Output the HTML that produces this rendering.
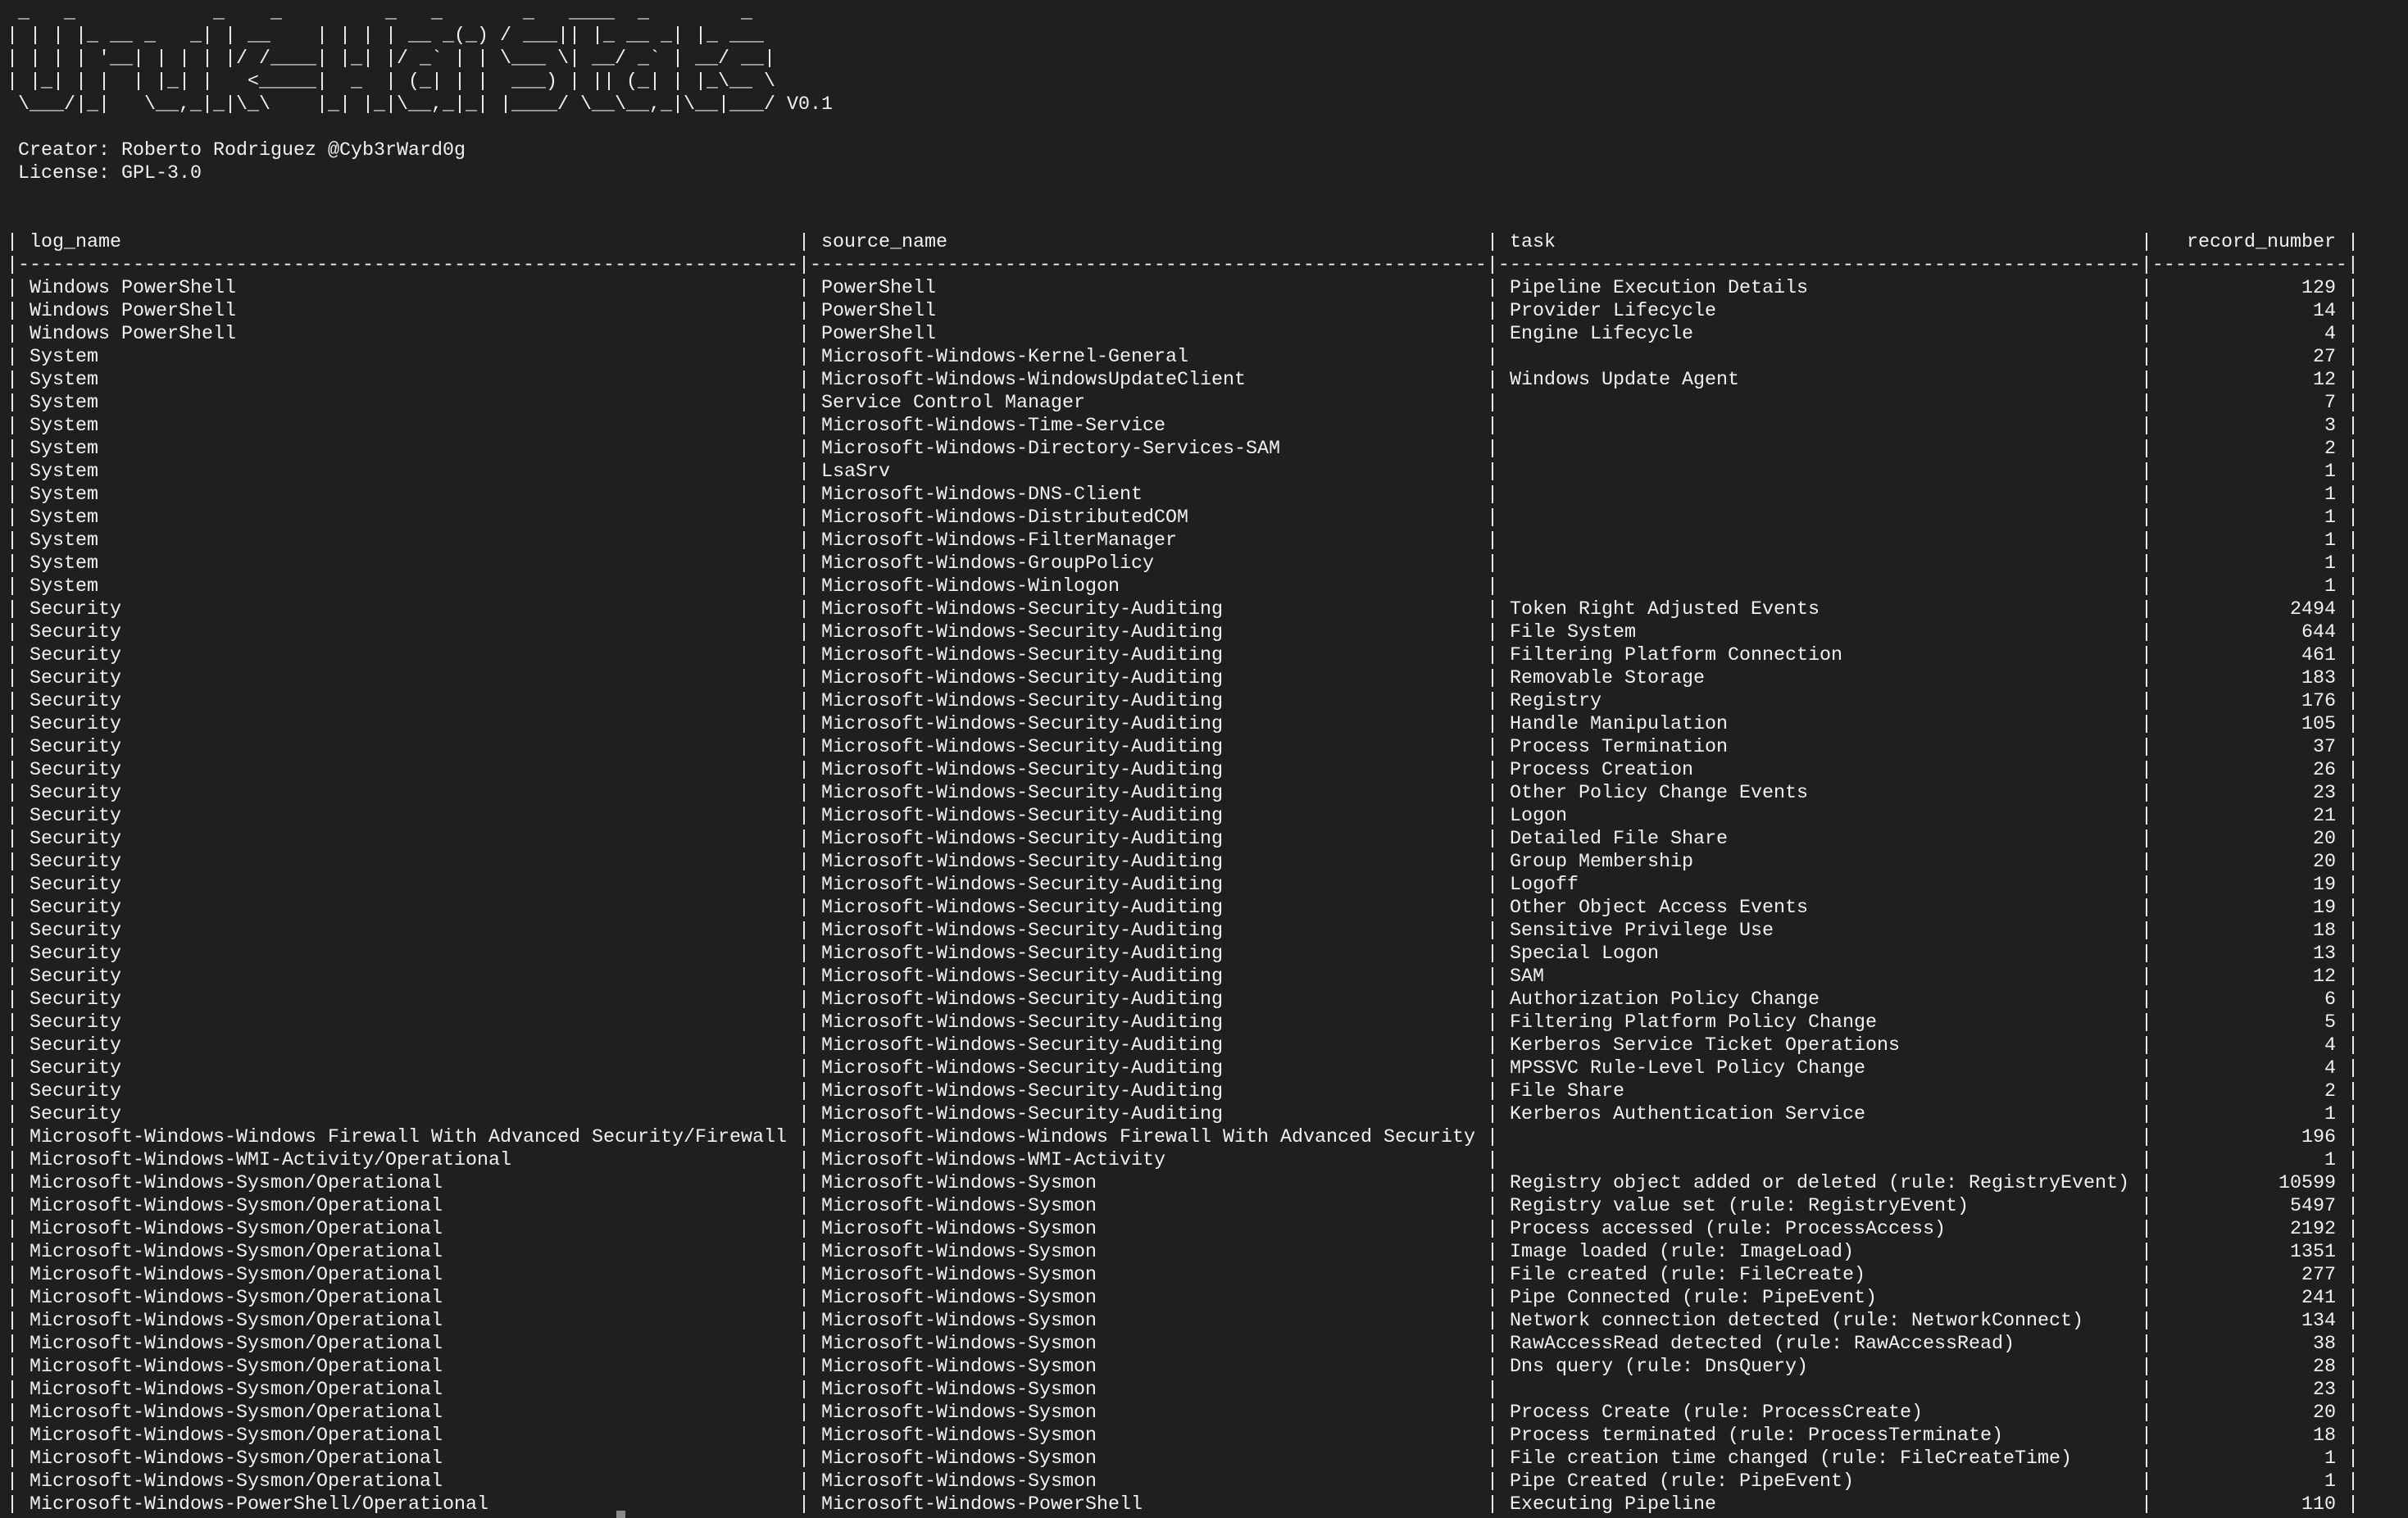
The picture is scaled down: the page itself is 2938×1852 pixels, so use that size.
<!DOCTYPE html>
<html><head><meta charset="utf-8"><style>
html,body{margin:0;padding:0;background:#1f1f1f;width:2938px;height:1852px;overflow:hidden}
body{position:relative;color:#f2f2f2;font-family:"Liberation Mono",monospace;font-size:23.33px;line-height:28px}
pre{position:absolute;left:8px;top:2px;margin:0;font:inherit;white-space:pre}
.t{position:absolute;left:0;top:282px;width:2938px}
.r{position:relative;height:28px;white-space:pre}
.r span{position:absolute;top:0}
.a{left:36px}.b{left:1002px}.c{left:1842px}
.a::before,.b::before,.c::before{content:"|";position:absolute;left:-28px}
.n{left:2612px;width:252px;text-align:right;padding-right:14px;box-sizing:border-box}
.n::before{content:"|";position:absolute;left:0}
.n::after{content:"|";position:absolute;left:252px}
.cur{position:absolute;left:752px;top:1843px;width:11px;height:9px;background:#8a8a8a}
</style></head><body>
<pre> _   _            _    _         _   _       _   ____  _        _
| | | |_ __ _   _| | __    | | | | __ _(_) / ___|| |_ __ _| |_ ___
| | | | '__| | | | |/ /____| |_| |/ _` | | \___ \| __/ _` | __/ __|
| |_| | |  | |_| |   &lt;_____|  _  | (_| | |  ___) | || (_| | |_\__ \
 \___/|_|   \__,_|_|\_\    |_| |_|\__,_|_| |____/ \__\__,_|\__|___/ V0.1

 Creator: Roberto Rodriguez @Cyb3rWard0g
 License: GPL-3.0



|--------------------------------------------------------------------|-----------------------------------------------------------|--------------------------------------------------------|-----------------|</pre>
<div class="t">
<div class="r"><span class="a">log_name</span><span class="b">source_name</span><span class="c">task</span><span class="n">record_number</span></div>
<div class="r"></div>
<div class="r"><span class="a">Windows PowerShell</span><span class="b">PowerShell</span><span class="c">Pipeline Execution Details</span><span class="n">129</span></div>
<div class="r"><span class="a">Windows PowerShell</span><span class="b">PowerShell</span><span class="c">Provider Lifecycle</span><span class="n">14</span></div>
<div class="r"><span class="a">Windows PowerShell</span><span class="b">PowerShell</span><span class="c">Engine Lifecycle</span><span class="n">4</span></div>
<div class="r"><span class="a">System</span><span class="b">Microsoft-Windows-Kernel-General</span><span class="c"></span><span class="n">27</span></div>
<div class="r"><span class="a">System</span><span class="b">Microsoft-Windows-WindowsUpdateClient</span><span class="c">Windows Update Agent</span><span class="n">12</span></div>
<div class="r"><span class="a">System</span><span class="b">Service Control Manager</span><span class="c"></span><span class="n">7</span></div>
<div class="r"><span class="a">System</span><span class="b">Microsoft-Windows-Time-Service</span><span class="c"></span><span class="n">3</span></div>
<div class="r"><span class="a">System</span><span class="b">Microsoft-Windows-Directory-Services-SAM</span><span class="c"></span><span class="n">2</span></div>
<div class="r"><span class="a">System</span><span class="b">LsaSrv</span><span class="c"></span><span class="n">1</span></div>
<div class="r"><span class="a">System</span><span class="b">Microsoft-Windows-DNS-Client</span><span class="c"></span><span class="n">1</span></div>
<div class="r"><span class="a">System</span><span class="b">Microsoft-Windows-DistributedCOM</span><span class="c"></span><span class="n">1</span></div>
<div class="r"><span class="a">System</span><span class="b">Microsoft-Windows-FilterManager</span><span class="c"></span><span class="n">1</span></div>
<div class="r"><span class="a">System</span><span class="b">Microsoft-Windows-GroupPolicy</span><span class="c"></span><span class="n">1</span></div>
<div class="r"><span class="a">System</span><span class="b">Microsoft-Windows-Winlogon</span><span class="c"></span><span class="n">1</span></div>
<div class="r"><span class="a">Security</span><span class="b">Microsoft-Windows-Security-Auditing</span><span class="c">Token Right Adjusted Events</span><span class="n">2494</span></div>
<div class="r"><span class="a">Security</span><span class="b">Microsoft-Windows-Security-Auditing</span><span class="c">File System</span><span class="n">644</span></div>
<div class="r"><span class="a">Security</span><span class="b">Microsoft-Windows-Security-Auditing</span><span class="c">Filtering Platform Connection</span><span class="n">461</span></div>
<div class="r"><span class="a">Security</span><span class="b">Microsoft-Windows-Security-Auditing</span><span class="c">Removable Storage</span><span class="n">183</span></div>
<div class="r"><span class="a">Security</span><span class="b">Microsoft-Windows-Security-Auditing</span><span class="c">Registry</span><span class="n">176</span></div>
<div class="r"><span class="a">Security</span><span class="b">Microsoft-Windows-Security-Auditing</span><span class="c">Handle Manipulation</span><span class="n">105</span></div>
<div class="r"><span class="a">Security</span><span class="b">Microsoft-Windows-Security-Auditing</span><span class="c">Process Termination</span><span class="n">37</span></div>
<div class="r"><span class="a">Security</span><span class="b">Microsoft-Windows-Security-Auditing</span><span class="c">Process Creation</span><span class="n">26</span></div>
<div class="r"><span class="a">Security</span><span class="b">Microsoft-Windows-Security-Auditing</span><span class="c">Other Policy Change Events</span><span class="n">23</span></div>
<div class="r"><span class="a">Security</span><span class="b">Microsoft-Windows-Security-Auditing</span><span class="c">Logon</span><span class="n">21</span></div>
<div class="r"><span class="a">Security</span><span class="b">Microsoft-Windows-Security-Auditing</span><span class="c">Detailed File Share</span><span class="n">20</span></div>
<div class="r"><span class="a">Security</span><span class="b">Microsoft-Windows-Security-Auditing</span><span class="c">Group Membership</span><span class="n">20</span></div>
<div class="r"><span class="a">Security</span><span class="b">Microsoft-Windows-Security-Auditing</span><span class="c">Logoff</span><span class="n">19</span></div>
<div class="r"><span class="a">Security</span><span class="b">Microsoft-Windows-Security-Auditing</span><span class="c">Other Object Access Events</span><span class="n">19</span></div>
<div class="r"><span class="a">Security</span><span class="b">Microsoft-Windows-Security-Auditing</span><span class="c">Sensitive Privilege Use</span><span class="n">18</span></div>
<div class="r"><span class="a">Security</span><span class="b">Microsoft-Windows-Security-Auditing</span><span class="c">Special Logon</span><span class="n">13</span></div>
<div class="r"><span class="a">Security</span><span class="b">Microsoft-Windows-Security-Auditing</span><span class="c">SAM</span><span class="n">12</span></div>
<div class="r"><span class="a">Security</span><span class="b">Microsoft-Windows-Security-Auditing</span><span class="c">Authorization Policy Change</span><span class="n">6</span></div>
<div class="r"><span class="a">Security</span><span class="b">Microsoft-Windows-Security-Auditing</span><span class="c">Filtering Platform Policy Change</span><span class="n">5</span></div>
<div class="r"><span class="a">Security</span><span class="b">Microsoft-Windows-Security-Auditing</span><span class="c">Kerberos Service Ticket Operations</span><span class="n">4</span></div>
<div class="r"><span class="a">Security</span><span class="b">Microsoft-Windows-Security-Auditing</span><span class="c">MPSSVC Rule-Level Policy Change</span><span class="n">4</span></div>
<div class="r"><span class="a">Security</span><span class="b">Microsoft-Windows-Security-Auditing</span><span class="c">File Share</span><span class="n">2</span></div>
<div class="r"><span class="a">Security</span><span class="b">Microsoft-Windows-Security-Auditing</span><span class="c">Kerberos Authentication Service</span><span class="n">1</span></div>
<div class="r"><span class="a">Microsoft-Windows-Windows Firewall With Advanced Security/Firewall</span><span class="b">Microsoft-Windows-Windows Firewall With Advanced Security</span><span class="c"></span><span class="n">196</span></div>
<div class="r"><span class="a">Microsoft-Windows-WMI-Activity/Operational</span><span class="b">Microsoft-Windows-WMI-Activity</span><span class="c"></span><span class="n">1</span></div>
<div class="r"><span class="a">Microsoft-Windows-Sysmon/Operational</span><span class="b">Microsoft-Windows-Sysmon</span><span class="c">Registry object added or deleted (rule: RegistryEvent)</span><span class="n">10599</span></div>
<div class="r"><span class="a">Microsoft-Windows-Sysmon/Operational</span><span class="b">Microsoft-Windows-Sysmon</span><span class="c">Registry value set (rule: RegistryEvent)</span><span class="n">5497</span></div>
<div class="r"><span class="a">Microsoft-Windows-Sysmon/Operational</span><span class="b">Microsoft-Windows-Sysmon</span><span class="c">Process accessed (rule: ProcessAccess)</span><span class="n">2192</span></div>
<div class="r"><span class="a">Microsoft-Windows-Sysmon/Operational</span><span class="b">Microsoft-Windows-Sysmon</span><span class="c">Image loaded (rule: ImageLoad)</span><span class="n">1351</span></div>
<div class="r"><span class="a">Microsoft-Windows-Sysmon/Operational</span><span class="b">Microsoft-Windows-Sysmon</span><span class="c">File created (rule: FileCreate)</span><span class="n">277</span></div>
<div class="r"><span class="a">Microsoft-Windows-Sysmon/Operational</span><span class="b">Microsoft-Windows-Sysmon</span><span class="c">Pipe Connected (rule: PipeEvent)</span><span class="n">241</span></div>
<div class="r"><span class="a">Microsoft-Windows-Sysmon/Operational</span><span class="b">Microsoft-Windows-Sysmon</span><span class="c">Network connection detected (rule: NetworkConnect)</span><span class="n">134</span></div>
<div class="r"><span class="a">Microsoft-Windows-Sysmon/Operational</span><span class="b">Microsoft-Windows-Sysmon</span><span class="c">RawAccessRead detected (rule: RawAccessRead)</span><span class="n">38</span></div>
<div class="r"><span class="a">Microsoft-Windows-Sysmon/Operational</span><span class="b">Microsoft-Windows-Sysmon</span><span class="c">Dns query (rule: DnsQuery)</span><span class="n">28</span></div>
<div class="r"><span class="a">Microsoft-Windows-Sysmon/Operational</span><span class="b">Microsoft-Windows-Sysmon</span><span class="c"></span><span class="n">23</span></div>
<div class="r"><span class="a">Microsoft-Windows-Sysmon/Operational</span><span class="b">Microsoft-Windows-Sysmon</span><span class="c">Process Create (rule: ProcessCreate)</span><span class="n">20</span></div>
<div class="r"><span class="a">Microsoft-Windows-Sysmon/Operational</span><span class="b">Microsoft-Windows-Sysmon</span><span class="c">Process terminated (rule: ProcessTerminate)</span><span class="n">18</span></div>
<div class="r"><span class="a">Microsoft-Windows-Sysmon/Operational</span><span class="b">Microsoft-Windows-Sysmon</span><span class="c">File creation time changed (rule: FileCreateTime)</span><span class="n">1</span></div>
<div class="r"><span class="a">Microsoft-Windows-Sysmon/Operational</span><span class="b">Microsoft-Windows-Sysmon</span><span class="c">Pipe Created (rule: PipeEvent)</span><span class="n">1</span></div>
<div class="r"><span class="a">Microsoft-Windows-PowerShell/Operational</span><span class="b">Microsoft-Windows-PowerShell</span><span class="c">Executing Pipeline</span><span class="n">110</span></div>
</div>
<div class="cur"></div>
</body></html>
